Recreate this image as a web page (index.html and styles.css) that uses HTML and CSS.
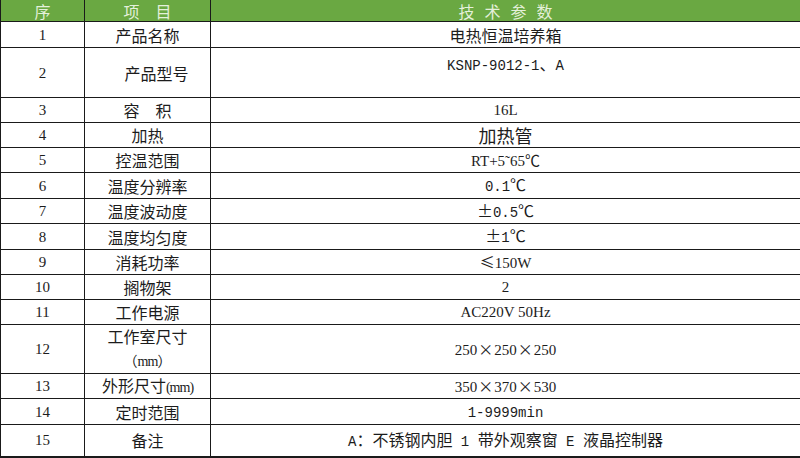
FILE: index.html
```html
<!DOCTYPE html>
<html lang="zh-CN">
<head>
<meta charset="utf-8">
<title>技术参数</title>
<link rel="stylesheet" href="styles.css">
</head>
<body>
<table class="spec">
  <colgroup>
    <col class="c1"><col class="c2"><col class="c3">
  </colgroup>
  <thead>
    <tr class="head">
      <th>序</th>
      <th>项　目</th>
      <th class="wide">技术参数</th>
    </tr>
  </thead>
  <tbody>
    <tr class="h26"><td class="n">1</td><td>产品名称</td><td>电热恒温培养箱</td></tr>
    <tr class="h50"><td class="n">2</td><td class="shift">产品型号</td><td class="top"><span class="m">KSNP-9012-1</span>、<span class="m">A</span></td></tr>
    <tr class="h25"><td class="n">3</td><td>容　积</td><td class="n">16L</td></tr>
    <tr class="h25"><td class="n">4</td><td>加热</td><td class="big">加热管</td></tr>
    <tr class="h25"><td class="n">5</td><td>控温范围</td><td class="n">RT+5˜65<span class="c">℃</span></td></tr>
    <tr class="h26"><td class="n">6</td><td>温度分辨率</td><td><span class="m">0.1</span>℃</td></tr>
    <tr class="h25"><td class="n">7</td><td>温度波动度</td><td>±<span class="m">0.5</span>℃</td></tr>
    <tr class="h26"><td class="n">8</td><td>温度均匀度</td><td>±<span class="m">1</span>℃</td></tr>
    <tr class="h25"><td class="n">9</td><td>消耗功率</td><td class="n"><span class="c">≤</span>150W</td></tr>
    <tr class="h25"><td class="n">10</td><td>搁物架</td><td class="n">2</td></tr>
    <tr class="h25"><td class="n">11</td><td>工作电源</td><td class="n">AC220V 50Hz</td></tr>
    <tr class="h49"><td class="n">12</td><td class="two">工作室尺寸<br><span class="small">（<span class="ms">mm</span>）</span></td><td class="n">250<span class="x">×</span>250<span class="x">×</span>250</td></tr>
    <tr class="h25"><td class="n">13</td><td>外形尺寸<span class="ms">(mm)</span></td><td class="n">350<span class="x">×</span>370<span class="x">×</span>530</td></tr>
    <tr class="h26"><td class="n">14</td><td>定时范围</td><td><span class="m">1-9999min</span></td></tr>
    <tr class="h32"><td class="n">15</td><td>备注</td><td><span class="m">A</span>：不锈钢内胆<span class="m"> 1 </span>带外观察窗<span class="m"> E </span>液晶控制器</td></tr>
  </tbody>
</table>
</body>
</html>
```
FILE: styles.css
```css
html, body {
  margin: 0;
  padding: 0;
  background: #ffffff;
}

body {
  font-family: "Noto Sans CJK SC", "Noto Sans", sans-serif;
  font-size: 16px;
  color: #1c1c1c;
}

.spec {
  border-collapse: collapse;
  table-layout: fixed;
  width: 800px;
}

.c1 { width: 84px; }
.c2 { width: 126px; }
.c3 { width: 590px; }

.spec th,
.spec td {
  border: 1px solid #1a1a1a;
  padding: 0;
  text-align: center;
  vertical-align: middle;
  line-height: 20px;
  white-space: nowrap;
  overflow: hidden;
}

.head th {
  background: #6aa842;
  color: #e4f0da;
  font-weight: normal;
  height: 21px;
  border-top: none;
  font-size: 16px;
}

.head .wide {
  letter-spacing: 10px;
  text-indent: 10px;
}

.h25 { height: 25px; }
.h26 { height: 26px; }
.h49 { height: 49px; }
.h50 { height: 50px; }
.h32 { height: 32px; }

.spec tbody tr:last-child td {
  border-bottom: 2px solid #1a1a1a;
}

.n {
  font-family: "Liberation Serif", "Noto Sans CJK SC", serif;
  font-size: 15px;
}

.m {
  font-family: "Liberation Mono", monospace;
  font-size: 14px;
}

.ms {
  font-family: "Liberation Serif", serif;
  font-size: 14px;
  letter-spacing: -1px;
}

.c {
  font-family: "Noto Sans CJK SC", sans-serif;
  font-size: 15px;
}

.x {
  display: inline-block;
  width: 17px;
  text-align: center;
  font-family: "Noto Sans CJK SC", sans-serif;
  font-size: 15px;
}

.big {
  font-size: 18px;
}

.top {
  vertical-align: top !important;
  padding-top: 5px !important;
}

.shift {
  padding-left: 18px !important;
}

.two {
  line-height: 23px !important;
}

.small {
  font-size: 14px;
}
```
